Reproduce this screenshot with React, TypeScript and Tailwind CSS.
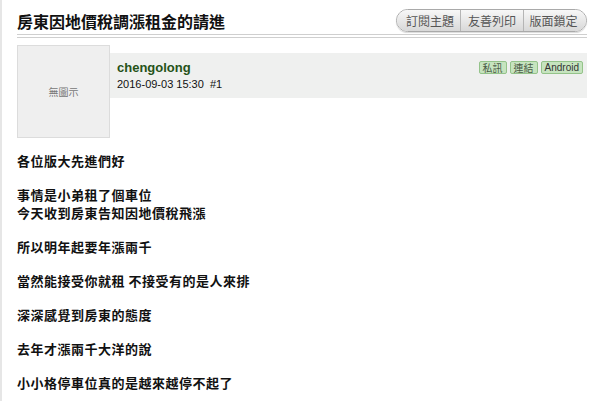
const cjk = "font-['Noto_Sans_CJK_TC','Noto_Sans',sans-serif]";

const paragraphs = [
  ["各位版大先進們好"],
  ["事情是小弟租了個車位", "今天收到房東告知因地價稅飛漲"],
  ["所以明年起要年漲兩千"],
  ["當然能接受你就租 不接受有的是人來排"],
  ["深深感覺到房東的態度"],
  ["去年才漲兩千大洋的說"],
  ["小小格停車位真的是越來越停不起了"],
];

function ToolButton({ label, first, last }: { label: string; first?: boolean; last?: boolean }) {
  return (
    <div
      className={`flex h-full w-[63px] items-center justify-center bg-gradient-to-b from-[#f7f7f7] to-[#d8d8d8] text-[12px] text-[#555] ${
        first ? "rounded-l-full pl-[3px]" : "border-l border-[#b5b5b5]"
      } ${last ? "rounded-r-full pr-[3px]" : ""}`}
    >
      {label}
    </div>
  );
}

function Badge({ label }: { label: string }) {
  return (
    <span className="flex h-[13px] items-center rounded-[2px] border border-[#94c38a] bg-[#c6e4bf] px-[3px] text-[10px] leading-none text-[#4a5a46]">
      {label}
    </span>
  );
}

export default function App() {
  return (
    <div className={`min-h-[401px] w-[600px] border-l-2 border-[#e6e6e6] bg-white ${cjk}`}>
      <div className="ml-[15px] w-[570px]">
        <div className="flex h-[34px] items-start justify-between pt-[9px]">
          <h1 className="mt-[1px] text-[16px] font-bold leading-[22px] text-[#111]">
            房東因地價稅調漲租金的請進
          </h1>
          <div className="flex h-[23px] rounded-full border border-[#a9a9a9] shadow-[0_1px_1px_rgba(0,0,0,0.15)]">
            <ToolButton label="訂閱主題" first />
            <ToolButton label="友善列印" />
            <ToolButton label="版面鎖定" last />
          </div>
        </div>
        <div className="h-[4px] border-y border-[#cfcfcf]" />

        <div className="mt-[7px] flex">
          <div className="flex h-[93px] w-[93px] shrink-0 items-center justify-center border border-[#dcdcdc] bg-[#efefef] text-[10px] text-[#777]">
            無圖示
          </div>
          <div className="mt-[8px] flex h-[45px] flex-1 justify-between bg-[#eff0ef] pl-[7px] pr-[4px]">
            <div className="pt-[7px]">
              <div className="font-['Liberation_Sans',sans-serif] text-[13px] font-bold leading-[16px] text-[#255217]">
                chengolong
              </div>
              <div className="mt-[1px] font-['Liberation_Sans',sans-serif] text-[11px] leading-[14px] text-[#111]">
                2016-09-03 15:30&nbsp;&nbsp;#1
              </div>
            </div>
            <div className="flex gap-[3px] pt-[8px]">
              <Badge label="私訊" />
              <Badge label="連結" />
              <span className="flex h-[13px] items-center rounded-[2px] border border-[#94c38a] bg-[#c6e4bf] px-[3px] font-['Liberation_Sans',sans-serif] text-[10px] leading-none text-[#333]">
                Android
              </span>
            </div>
          </div>
        </div>

        <div className="mt-[14px] flex flex-col gap-[16px] text-[13px] font-bold leading-[18px] tracking-[0.5px] text-[#111]">
          {paragraphs.map((p, i) => (
            <div key={i}>
              {p.map((l, j) => (
                <div key={j} className="whitespace-pre">
                  {l}
                </div>
              ))}
            </div>
          ))}
        </div>
      </div>
    </div>
  );
}
